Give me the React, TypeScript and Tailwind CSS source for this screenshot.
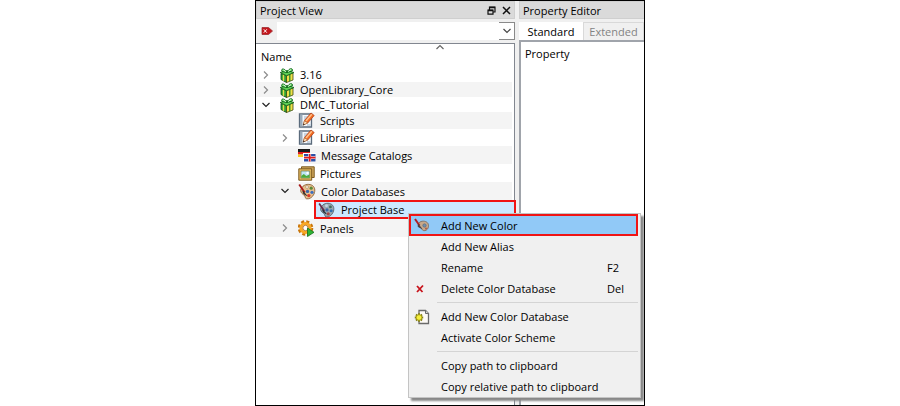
import React from "react";
import { twMerge } from "tailwind-merge";

type IconProps = { className?: string };

const Gift = () => (
  <svg viewBox="0 0 16 16" className="size-4 shrink-0">
    <path d="M2 6.500 7.500 8.500v7L2 12.500z" fill="#2fa536" stroke="#0c3d10" strokeWidth=".8" />
    <path d="M7.500 8.500 14 6v7l-6.500 2.500z" fill="#f0e04a" stroke="#3c4a10" strokeWidth=".8" />
    <path d="M4.500 7.500v6.400" stroke="#e6dc4a" strokeWidth="1.400" />
    <path d="M10.800 7.400v6.800" stroke="#2a8a2c" strokeWidth="1.300" />
    <path d="M1.200 5.500 8 3.500l7 2-7.500 3.200z" fill="#5fcf55" stroke="#0f5a18" strokeWidth=".8" />
    <path d="M8 5.500C5.500.5 1.500 1.500 3 4.500zM8 5.500C10 .5 14.500.8 13.200 4z" fill="#7fe07a" stroke="#0f6a1b" strokeWidth="1" />
    <path d="M4.500 3 7 4.600M11.800 2.600 9.200 4.500" stroke="#e4ffe0" strokeWidth=".9" />
  </svg>
);

const Script = () => (
  <svg viewBox="0 0 17 17" className="size-[17px] shrink-0">
    <path d="M1.500 2h12v13h-12z" fill="#f3f7fb" stroke="#5b6b7c" strokeWidth="1.300" />
    <path d="M2 2.500h2.500v12H2z" fill="#9aaaba" />
    <path d="M6 5h4M6 7h3M9 13h3.500" stroke="#9fb4c8" />
    <path d="M5.500 12.500 6.500 8.500l6.500-7.500 3.200 2.500L9.700 11z" fill="#f26b22" stroke="#b8431a" strokeWidth=".8" />
    <path d="M8 9 13.800 2.300" stroke="#ffc08a" strokeWidth="1.500" />
    <path d="M5 13.200 6.500 8.800 9.700 11z" fill="#ffe2b8" stroke="#9a5a30" strokeWidth=".6" />
    <path d="M4.900 13.400 5.600 11.500l1.200 1z" fill="#222" />
  </svg>
);

const Flags = () => (
  <svg viewBox="0 0 18 14" className="h-[14px] w-[18px] shrink-0">
    <path d="M0 1h12v3H0z" fill="#1a1a1a" />
    <path d="M0 4h12v2.500H0z" fill="#e01c1c" />
    <path d="M0 6.500h12V9H0z" fill="#f8c81c" />
    <path d="M5 5h13v9H5z" fill="#fff" />
    <path d="M6 6h11.500v7.500H6z" fill="#2c4fa5" />
    <path d="M11.700 6v7.500M6 9.700h11.500" stroke="#fff" strokeWidth="2.800" />
    <path d="M11.700 6v7.500M6 9.700h11.500" stroke="#e01c1c" strokeWidth="1.700" />
  </svg>
);

const Picture = () => (
  <svg viewBox="0 0 17 15" className="h-[15px] w-[17px] shrink-0">
    <path d="M3.500.8h12.700v10.700H3.500z" fill="#cfa55a" stroke="#7c5a20" />
    <path d="M.8 2.800h12.900v11.400H.8z" fill="#e3b860" stroke="#7c5a20" />
    <path d="M3 5h8.700v7H3z" fill="#bfe6f5" stroke="#6a7a4a" strokeWidth=".7" />
    <path d="M3.300 11.700V10l2.500-2 2.500 2 3.200-1.500v3.200z" fill="#4dab3a" />
    <circle cx="9.500" cy="7" r="1.200" fill="#fff" />
  </svg>
);

const Palette = () => (
  <svg viewBox="0 0 18 17" className="h-[17px] w-[18px] shrink-0">
    <path
      d="M3 6C5 1.500 10 .5 13.500 2c3.500 1.600 4 5.500 2.500 9-1.500 3.300-4.500 5.200-7.300 4.800-2-.3-1-2.600-2.700-3.800C4 10.800 2 9 3 6z"
      fill="#e7bf8e"
      stroke="#8a6238"
      strokeWidth=".9"
    />
    <circle cx="9" cy="4" r="1.500" fill="#f0ead8" stroke="#a07c50" strokeWidth=".5" />
    <circle cx="13.200" cy="5.200" r="1.600" fill="#5a8a3a" />
    <circle cx="14" cy="9.300" r="1.600" fill="#3b6fc0" />
    <circle cx="10.800" cy="12.600" r="1.700" fill="#d93a2a" />
    <circle cx="9.500" cy="8.400" r="1.700" fill="#3a66a8" />
    <path d="m1.200 1.500 5.500 8" stroke="#a81818" strokeWidth="1.900" />
    <path d="M5 8.300 8.600 12.500 5.500 10.600z" fill="#2b2b2b" stroke="#2b2b2b" strokeWidth=".9" />
  </svg>
);

// palette as drawn on a selected row, tinted by the highlight
const SelectedPalette = () => (
  <svg viewBox="0 0 18 17" className="ml-[2px] h-4 w-[17px] shrink-0">
    <path
      d="M3 6C5 1.500 10 .5 13.500 2c3.500 1.600 4 5.500 2.500 9-1.500 3.300-4.500 5.200-7.300 4.800-2-.3-1-2.600-2.700-3.800C4 10.800 2 9 3 6z"
      fill="#9aa6b0"
      stroke="#4e5d6a"
      strokeWidth=".9"
    />
    <circle cx="9" cy="4" r="1.500" fill="#c2d6e4" />
    <circle cx="13.200" cy="5.200" r="1.500" fill="#3f6f5c" />
    <circle cx="14" cy="9.300" r="1.600" fill="#2f6fb0" />
    <circle cx="10.800" cy="12.600" r="1.700" fill="#a04848" />
    <circle cx="9.500" cy="8.400" r="1.700" fill="#3a66a8" />
    <path d="m1.200 1.500 5.500 8" stroke="#6a2c4a" strokeWidth="1.900" />
    <path d="M5 8.300 8.600 12.500 5.500 10.600z" fill="#22303c" stroke="#22303c" strokeWidth=".9" />
  </svg>
);

const AddColor = () => (
  <svg viewBox="0 0 16 14" className="h-[14px] w-4 shrink-0">
    <path
      d="M4.500 5.500C6 3 10 2.500 12.500 4c2.500 1.500 2.500 5 1 7-1.500 2-4 2-5 1s-.5-2-2-2.500S3.500 7.500 4.500 5.500z"
      fill="#c7a98a"
      stroke="#806a58"
      strokeWidth=".9"
    />
    <circle cx="10.500" cy="7.500" r="1.700" fill="#6f8fb0" stroke="#5a6470" strokeWidth=".6" />
    <circle cx="12" cy="10.500" r="1" fill="#b05a48" />
    <path d="m1 1 4.500 6.500" stroke="#b01c24" strokeWidth="2" />
    <path d="m4.500 6.500 3 4-3.500-2z" fill="#4a3c3c" stroke="#4a3c3c" strokeWidth=".8" />
  </svg>
);

const Gear = () => (
  <svg viewBox="0 0 17 17" className="size-[17px] shrink-0">
    <circle cx="7.500" cy="8" r="6.300" fill="none" stroke="#c87408" strokeWidth="3" strokeDasharray="2.900 2.048" />
    <circle cx="7.500" cy="8" r="4.500" fill="none" stroke="#f9a825" strokeWidth="3.200" />
    <circle cx="7.500" cy="8" r="2.700" fill="#fff" stroke="#a85c08" strokeWidth=".8" />
    <path d="M9.500 8 16 12.300l-6.500 4.200z" fill="#2fb534" stroke="#12701a" strokeWidth=".8" />
  </svg>
);

const NewFile = () => (
  <svg viewBox="0 0 16 16" className="size-4 shrink-0">
    <path d="M5 1.500h6.500l3 3v10H5z" fill="#fdfaf6" stroke="#6a6a6a" strokeWidth="1.300" />
    <path d="M11.500 1.500v3h3" fill="#d8d8d8" stroke="#6a6a6a" />
    <path d="M5 4.300v8.400M.8 8.500h8.400M2 5.500l6 6M8 5.500l-6 6" stroke="#7f7a10" strokeWidth="1.800" />
    <circle cx="5" cy="8.500" r="2.800" fill="#f5ee3c" stroke="#a8a010" strokeWidth=".8" />
  </svg>
);

const Cross = () => (
  <svg viewBox="0 0 10 10" className="mr-[3px] size-[10px] shrink-0">
    <path d="m2 2 5.500 6M8 1.500 2 8" stroke="#c8141c" strokeWidth="1.800" />
  </svg>
);

const Clear = () => (
  <svg viewBox="0 0 12 10" className="h-[10px] w-3">
    <path d="M1 1.500h6.500L11.500 5l-4 3.500H1z" fill="#c4161c" stroke="#9d2c30" strokeWidth=".8" />
    <path d="m2.800 3.300 3 3.400M5.800 3.300l-3 3.400" stroke="#fff" strokeWidth="1" />
  </svg>
);

const Chevron = ({ className }: IconProps) => (
  <svg viewBox="0 0 10 10" className={twMerge("size-[10px] text-[#8c8c8c]", className)}>
    <path d="m3 1.500 3.500 3.500L3 8.500" fill="none" stroke="currentColor" strokeWidth="1.200" />
  </svg>
);

type Node = {
  label: string;
  icon: React.ReactNode;
  state?: "open" | "closed";
  row: string;
};

const nodes: Node[] = [
  { label: "3.16", icon: <Gift />, state: "closed", row: "h-[15px]" },
  { label: "OpenLibrary_Core", icon: <Gift />, state: "closed", row: "h-[15px]" },
  { label: "DMC_Tutorial", icon: <Gift />, state: "open", row: "h-[15px]" },
  { label: "Scripts", icon: <Script />, row: "h-[17px] pl-[19px]" },
  { label: "Libraries", icon: <Script />, state: "closed", row: "h-[17px] pl-[19px]" },
  { label: "Message Catalogs", icon: <Flags />, row: "h-[18px] pl-[19px]" },
  { label: "Pictures", icon: <Picture />, row: "h-[18px] pl-[19px]" },
  { label: "Color Databases", icon: <Palette />, state: "open", row: "h-[18px] pl-[19px]" },
  { label: "Panels", icon: <Gear />, state: "closed", row: "h-[18px] pl-[19px]" },
];

function TreeRow({ node }: { node: Node }) {
  return (
    <li className={twMerge("mr-[2px] flex items-center even:bg-[#f4f4f4]", node.row)}>
      <span className="flex w-[23px] shrink-0 pl-[5px]">
        {node.state && (
          <button aria-label={`Toggle ${node.label}`} aria-expanded={node.state === "open"}>
            <Chevron className={node.state === "open" ? "rotate-90 text-[#222]" : ""} />
          </button>
        )}
      </span>
      {node.icon}
      <span className="pl-[5px]">{node.label}</span>
    </li>
  );
}

type Item = { label: string; icon?: React.ReactNode; keys?: string; active?: boolean };

const groups: Item[][] = [
  [
    { label: "Add New Color", icon: <AddColor />, active: true },
    { label: "Add New Alias" },
    { label: "Rename", keys: "F2" },
    { label: "Delete Color Database", icon: <Cross />, keys: "Del" },
  ],
  [{ label: "Add New Color Database", icon: <NewFile /> }, { label: "Activate Color Scheme" }],
  [{ label: "Copy path to clipboard" }, { label: "Copy relative path to clipboard" }],
];

function ContextMenu() {
  return (
    <div
      role="menu"
      className="absolute top-[212px] left-[152px] w-[233px] border border-[#c4c4c4] bg-[#f0f0f0] pr-[2px] shadow-[3px_3px_2px_#888888]"
    >
      {groups.map((items, i) => (
        <div key={i}>
          {i > 0 && <hr className="my-[3px] ml-7 border-[#d4d4d4]" />}
          {items.map((item) => (
            <button
              key={item.label}
              role="menuitem"
              className={twMerge(
                "flex h-[21px] w-full items-center border-2 border-transparent text-left",
                item.active && "h-[22px] border-[#f01414] bg-[#91c9f7]"
              )}
            >
              <span className="flex w-[30px] shrink-0 justify-center pr-[9px]">{item.icon}</span>
              <span className="flex-1">{item.label}</span>
              {item.keys && <span className="w-[29px]">{item.keys}</span>}
            </button>
          ))}
        </div>
      ))}
    </div>
  );
}

export default function App() {
  return (
    <main className="min-h-screen bg-white font-['Open_Sans','Noto_Sans',sans-serif] text-[11px] leading-[15px] text-black">
      <div className="relative mx-auto flex min-h-screen w-full max-w-[390px] gap-1 overflow-hidden border border-black bg-[#f0f0f0]">
        <section className="flex w-[259px] shrink-0 flex-col">
          <header className="flex h-[18px] items-center border border-[#cfcfcf] bg-[#dadada] pl-[3px]">
            <h2 className="flex-1">Project View</h2>
            <button aria-label="Float" className="mr-[6px]">
              <svg viewBox="0 0 9 9" className="size-[9px]">
                <path d="M2.500 5V1.200h5.500V6H6M1 4.200h5v4H1z" fill="none" stroke="#111" strokeWidth="1.200" />
                <path d="M2.500 1.500H8M1 4.500h5" stroke="#111" strokeWidth="1.500" />
              </svg>
            </button>
            <button aria-label="Close" className="mr-[3px]">
              <svg viewBox="0 0 9 9" className="size-[9px]">
                <path d="m1 1 7 7M8 1 1 8" stroke="#111" strokeWidth="1.500" />
              </svg>
            </button>
          </header>
          <div className="my-[3px] flex h-[18px]">
            <button aria-label="Clear filter" className="flex w-[21px] items-center justify-center">
              <Clear />
            </button>
            <input aria-label="Filter" className="min-w-0 flex-1 bg-white outline-none" />
            <button
              aria-label="Filter history"
              className="flex w-4 items-center justify-center border border-l-0 border-[#8a8a8a] bg-white"
            >
              <Chevron className="rotate-90 text-[#444]" />
            </button>
          </div>
          <div className="flex-1 border-t border-r border-[#828790] bg-white">
            <div className="flex h-[23px] flex-col pl-[5px]">
              <Chevron className="-mt-[2px] -mb-[3px] ml-[105px] shrink-0 -rotate-90 self-center text-[#666]" />
              <span>Name</span>
            </div>
            <ul>
              {nodes.slice(0, 8).map((node) => (
                <TreeRow key={node.label} node={node} />
              ))}
              <li className="-mr-[2px] ml-[58px] flex h-[19px] items-center border-2 border-[#f01414] bg-[#cce8ff]">
                <SelectedPalette />
                <span className="pl-[6px]">Project Base</span>
              </li>
              <li>
                <ul className="mr-[2px] bg-[#f4f4f4]">
                  <TreeRow node={nodes[8]} />
                </ul>
              </li>
            </ul>
          </div>
        </section>
        <section className="flex min-w-0 flex-1 flex-col">
          <header className="flex h-[18px] items-center border border-r-0 border-[#cfcfcf] bg-[#dadada] pl-[3px]">
            <h2>Property Editor</h2>
          </header>
          <div role="tablist" className="mt-[3px] flex h-[18px]">
            <button role="tab" aria-selected="true" className="w-16 bg-white">
              Standard
            </button>
            <button role="tab" aria-selected="false" className="flex-1 border border-b-0 border-[#d9d9d9] text-[#838383]">
              Extended
            </button>
          </div>
          <div className="flex-1 border-t-2 border-l-2 border-[#a0a4ab] bg-white pt-1 pl-1">Property</div>
        </section>
        <ContextMenu />
      </div>
    </main>
  );
}
